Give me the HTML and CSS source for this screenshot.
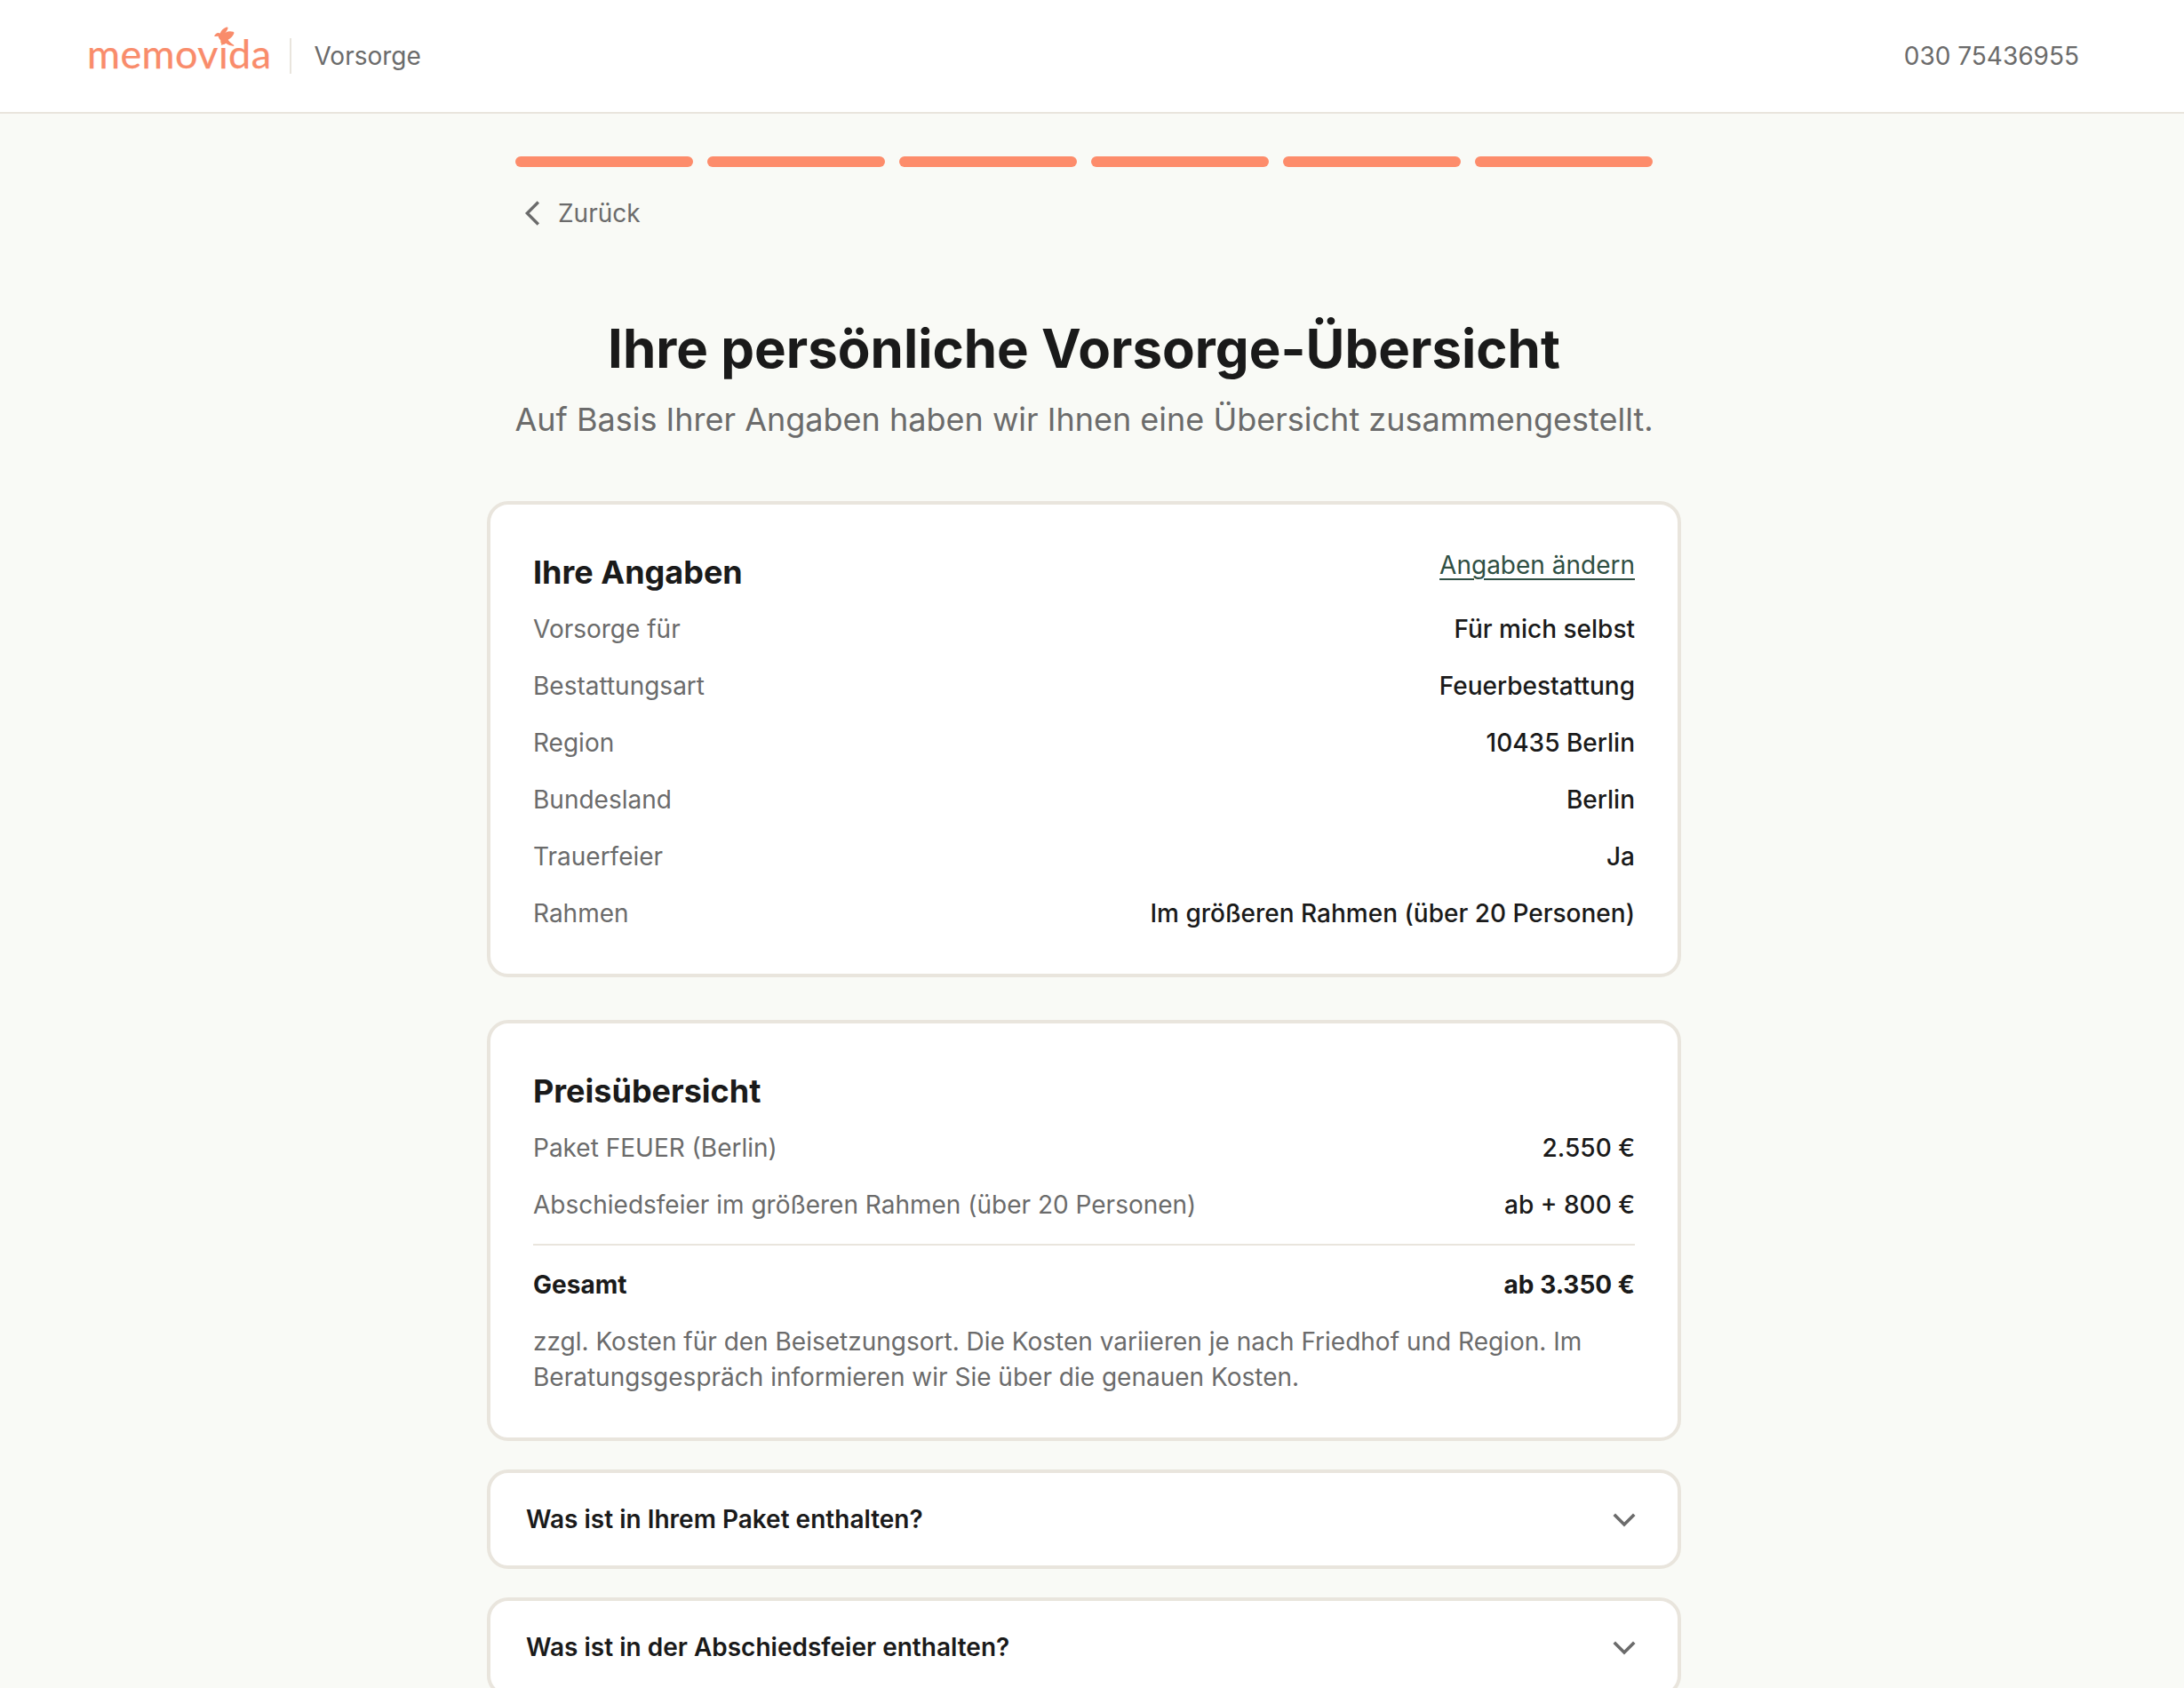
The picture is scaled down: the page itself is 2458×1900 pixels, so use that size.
FILE: index.html
```html
<!doctype html>
<html lang="de">
  <head>
    <meta charset="utf-8">
    <title>Vorsorge</title>
    <link rel="stylesheet" href="styles.css">
  </head>
  <body>
    <header class="topbar">
      <div class="brand">
        <span class="logo">
          memovida
          <svg class="bird" viewBox="0 0 24 24" aria-hidden="true">
            <path d="M0.3 10.4C1.4 8.8 2.8 7.4 4.6 7.2 5.6 7.1 6.4 7.4 7 7.9 8 5 10.4 2.2 14 0.8 15.2 0.4 16.2 0.5 16.2 1.4 16.1 3.4 14.8 5.4 13 7 15.8 5.4 19 5 22.4 6 23.6 6.4 23.6 7.4 23 8.6 21.6 11.6 19.4 14 16.4 15.4 17.6 17.4 20 19.6 23.2 21.6L23.2 23C20 22.6 16.4 21.4 13.8 19.6 12 20.6 10.2 21.4 8 21.6 8.6 20.2 9.2 18.8 9.2 17.4 7 15.8 5.4 13.6 4.8 11.2L1 11.4C0.4 11.4 0 11 0.3 10.4Z"/>
          </svg>
        </span>
        <span class="brand-sep"></span>
        <span class="brand-name">Vorsorge</span>
      </div>
      <a class="phone">030 75436955</a>
    </header>

    <div class="content">
      <main class="page">
        <div class="progress">
          <span></span><span></span><span></span><span></span><span></span><span></span>
        </div>
        <a class="back">
          <svg viewBox="0 0 24 24" aria-hidden="true"><path d="M15.5 4.5 8 12l7.5 7.5"/></svg>
          Zurück
        </a>

        <h1>Ihre persönliche Vorsorge-Übersicht</h1>
        <p class="lead">Auf Basis Ihrer Angaben haben wir Ihnen eine Übersicht zusammengestellt.</p>

        <section class="card details">
          <div class="card-head">
            <h2>Ihre Angaben</h2>
            <a class="change">Angaben ändern</a>
          </div>
          <div class="row"><span>Vorsorge für</span><b>Für mich selbst</b></div>
          <div class="row"><span>Bestattungsart</span><b>Feuerbestattung</b></div>
          <div class="row"><span>Region</span><b>10435 Berlin</b></div>
          <div class="row"><span>Bundesland</span><b>Berlin</b></div>
          <div class="row"><span>Trauerfeier</span><b>Ja</b></div>
          <div class="row"><span>Rahmen</span><b>Im größeren Rahmen (über 20 Personen)</b></div>
        </section>

        <section class="card prices">
          <div class="card-head">
            <h2>Preisübersicht</h2>
          </div>
          <div class="row"><span>Paket FEUER (Berlin)</span><b>2.550 €</b></div>
          <div class="row"><span>Abschiedsfeier im größeren Rahmen (über 20 Personen)</span><b>ab + 800 €</b></div>
          <div class="row total"><strong>Gesamt</strong><strong>ab 3.350 €</strong></div>
          <p class="note">zzgl. Kosten für den Beisetzungsort. Die Kosten variieren je nach Friedhof und Region. Im Beratungsgespräch informieren wir Sie über die genauen Kosten.</p>
        </section>

        <div class="accordion">
          <span>Was ist in Ihrem Paket enthalten?</span>
          <svg viewBox="0 0 24 24" aria-hidden="true"><path d="M4.5 8.5 12 16l7.5-7.5"/></svg>
        </div>
        <div class="accordion">
          <span>Was ist in der Abschiedsfeier enthalten?</span>
          <svg viewBox="0 0 24 24" aria-hidden="true"><path d="M4.5 8.5 12 16l7.5-7.5"/></svg>
        </div>
      </main>
    </div>
  </body>
</html>
```

FILE: styles.css
```css
html, body {
  margin: 0;
  height: 100%;
  overflow: hidden;
}

body {
  background: #f9faf6;
  color: #1a1a1a;
  font-family: Inter, "Liberation Sans", sans-serif;
  font-size: 28px;
  line-height: 40px;
}

.topbar {
  display: flex;
  align-items: center;
  justify-content: space-between;
  height: 126px;
  padding: 0 118px 0 98px;
  background: #fff;
  border-bottom: 2px solid #e9e5dd;
}

.brand {
  display: flex;
  align-items: center;
}

.logo {
  position: relative;
  top: -3px;
  color: #f98c6b;
  font-family: Lato, sans-serif;
  font-size: 45px;
  line-height: 50px;
  letter-spacing: 0.4px;
  -webkit-text-stroke: 0.25px #f98c6b;
}

.bird {
  position: absolute;
  left: 143px;
  top: -5px;
  width: 23px;
  height: 23px;
  fill: #f98c6b;
}

.brand-sep {
  width: 2px;
  height: 40px;
  margin: 0 25px 0 21px;
  background: #e9e5dd;
}

.brand-name,
.phone {
  color: #6b6b6b;
}

.content {
  padding-right: 18px;
}

.page {
  display: flex;
  flex-direction: column;
  align-items: center;
  width: 1344px;
  margin: 0 auto;
  padding-top: 48px;
}

.progress {
  display: flex;
  gap: 16px;
  width: 1280px;
}

.progress span {
  flex: 1;
  height: 12px;
  border-radius: 6px;
  background: #fd8c6b;
}

.back {
  display: flex;
  align-items: center;
  gap: 8px;
  width: 1280px;
  margin-top: 32px;
  color: #6b6b6b;
}

.back svg {
  width: 40px;
  height: 40px;
  fill: none;
  stroke: #6b6b6b;
  stroke-width: 2;
}

h1 {
  margin: 96px 0 0;
  font-size: 60px;
  line-height: 72px;
  font-weight: 700;
  text-align: center;
}

.lead {
  margin: 20px 0 0;
  color: #6b6b6b;
  font-size: 36px;
  line-height: 48px;
  text-align: center;
}

.card {
  box-sizing: border-box;
  width: 100%;
  padding: 48px;
  background: #fff;
  border: 4px solid #e9e5dd;
  border-radius: 24px;
}

.details {
  margin-top: 68px;
}

.details .row:last-child {
  padding-bottom: 0;
}

.prices {
  margin-top: 48px;
}

.card-head {
  display: flex;
  justify-content: space-between;
  align-items: flex-start;
  margin-bottom: 8px;
}

h2 {
  margin: 4px 0 0;
  font-size: 36px;
  line-height: 48px;
  font-weight: 700;
}

.change {
  color: #2f4f43;
  text-decoration: underline;
  text-underline-offset: 5px;
  text-decoration-thickness: 2px;
}

.row {
  display: flex;
  justify-content: space-between;
  padding: 12px 0;
}

.row span {
  color: #6b6b6b;
}

.row b {
  font-weight: 500;
}

.row strong {
  font-weight: 700;
}

.total {
  margin-top: 12px;
  padding-top: 24px;
  border-top: 2px solid #e9e5dd;
}

.note {
  margin: 12px 0 0;
  color: #6b6b6b;
}

.accordion {
  box-sizing: border-box;
  display: flex;
  align-items: center;
  justify-content: space-between;
  width: 100%;
  height: 112px;
  margin-top: 32px;
  padding: 0 42px 0 40px;
  background: #fff;
  border: 4px solid #e9e5dd;
  border-radius: 24px;
  font-weight: 600;
}

.accordion svg {
  width: 36px;
  height: 36px;
  fill: none;
  stroke: #6b6b6b;
  stroke-width: 2.4;
}
```
